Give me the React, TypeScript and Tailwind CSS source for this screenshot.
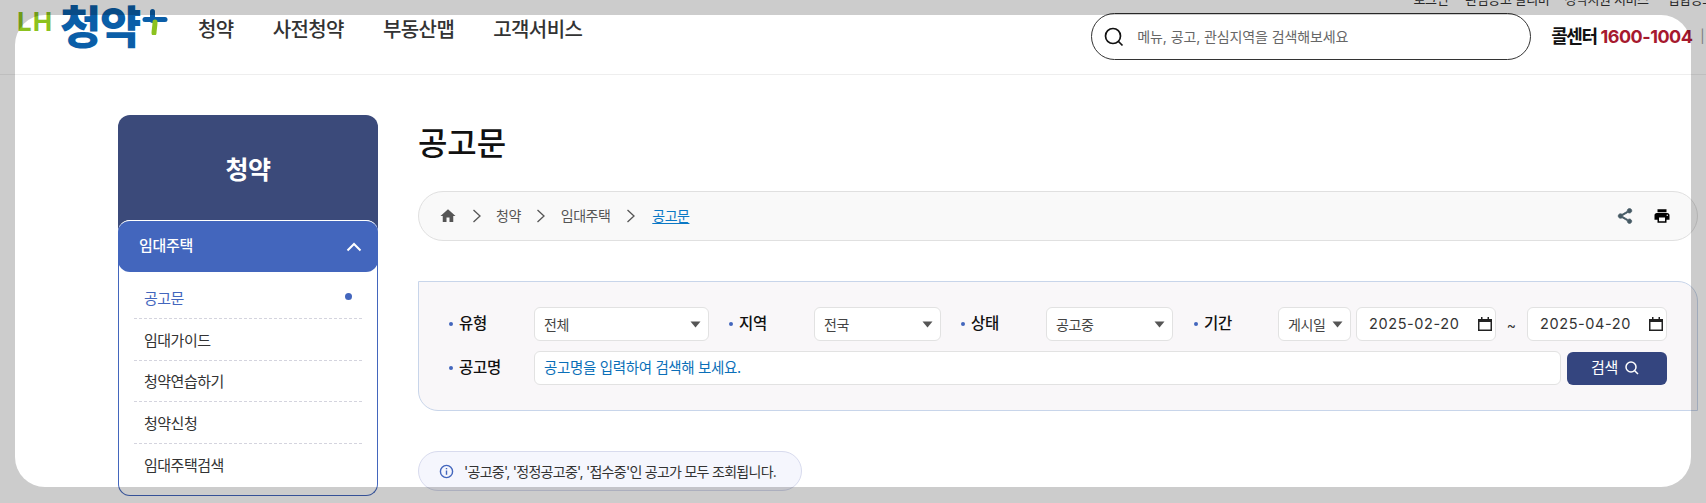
const Tri = ({ className = "" }: { className?: string }) => (
  <svg width="11" height="7" viewBox="0 0 11 7" className={className}>
    <path d="M0.5 0.5h10L5.500 6.500z" fill="#555" />
  </svg>
);

const Chev = () => (
  <svg width="10" height="16" viewBox="0 0 10 16" fill="none" stroke="#555" strokeWidth="1.3">
    <path d="M1.500 2l6.500 6-6.500 6" />
  </svg>
);

const Cal = () => (
  <svg width="14" height="14" viewBox="0 0 14 14" fill="none">
    <path d="M3 0h1.500v2H9.500V0H11v2h3v12H0V2h3z" fill="#222" />
    <rect x="1.500" y="5" width="11" height="7.500" fill="#fff" />
  </svg>
);

const Label = ({ text, className }: { text: string; className: string }) => (
  <div className={`flex items-center shrink-0 text-[15.500px] font-medium text-[#111] tracking-[-0.3px] ${className}`}>
    <span className="w-[4px] h-[4px] rounded-full bg-[#4366bd] mr-[6px]" />
    {text}
  </div>
);

const Select = ({ text, className }: { text: string; className: string }) => (
  <div className={`h-[34px] shrink-0 flex items-center justify-between pl-[9px] pr-[7px] bg-white border border-[#e2e2e2] rounded-[6px] text-[14px] text-[#444] tracking-[-0.4px] ${className}`}>
    <span>{text}</span>
    <Tri />
  </div>
);

const DateBox = ({ text }: { text: string }) => (
  <div className="w-[140px] h-[34px] shrink-0 flex items-center justify-between pl-[12px] pr-[3px] bg-white border border-[#e2e2e2] rounded-[6px] text-[14.500px] text-[#333] tracking-[0.6px]">
    <span>{text}</span>
    <Cal />
  </div>
);

const items = ["임대가이드", "청약연습하기", "청약신청", "임대주택검색"];

export default function App() {
  return (
    <div className="relative w-[1706px] h-[503px] overflow-hidden bg-white [font-family:Inter,'Noto_Sans_CJK_KR',sans-serif]">
      <div className="h-[7px] overflow-hidden flex items-end justify-end text-[13px] leading-[16px] text-[#333] tracking-[-0.4px] whitespace-nowrap">
        <div className="flex translate-x-[1px] -mr-[30px]">
          <span>로그인</span>
          <span className="ml-[17px]">관심공고 알리미</span>
          <span className="ml-[15px]">청약지원 서비스</span>
          <span className="ml-[19px]">입합공고안내</span>
        </div>
      </div>

      <header className="h-[68px] border-b border-[#eeeeee] flex items-center whitespace-nowrap">
        <div className="w-[198px] shrink-0 self-start flex items-start pl-[17px]">
          <span className="text-[26px] leading-[24px] font-bold text-[#8cc21f] mt-[3px] w-[44px] tracking-[1px]">LH</span>
          <span className="text-[45px] leading-[50px] font-black text-[#0a5ea8] -mt-[4px] -ml-[1px] w-[82px] tracking-[-1.500px]">청약</span>
          <svg width="26" height="26" viewBox="0 0 26 26" className="mt-[2px]">
            <path d="M10.500 2.500v9" stroke="#0a5ea8" strokeWidth="5" strokeLinecap="round" />
            <path d="M3 10.500h20" stroke="#0a5ea8" strokeWidth="5" strokeLinecap="round" />
            <path d="M13 13c0 5-1 8-1 11" stroke="#8cc21f" strokeWidth="5" strokeLinecap="round" fill="none" />
          </svg>
        </div>
        <nav className="flex gap-[39px] text-[20px] font-medium text-[#333] tracking-[-0.58px] -mt-[22px]">
          <span>청약</span>
          <span>사전청약</span>
          <span>부동산맵</span>
          <span>고객서비스</span>
        </nav>
        <div className="ml-[509px] w-[440px] h-[47px] shrink-0 -mt-[8px] flex items-center rounded-full border border-[#333] bg-white pl-[11px]">
          <svg width="22" height="22" viewBox="0 0 22 22" fill="none" stroke="#111" strokeWidth="1.700">
            <circle cx="10" cy="10" r="7.500" />
            <path d="M15.500 15.500l4 4" />
          </svg>
          <span className="ml-[12px] text-[14px] text-[#666] tracking-[-0.1px]">메뉴, 공고, 관심지역을 검색해보세요</span>
        </div>
        <div className="ml-[20px] flex items-center text-[18px] font-bold tracking-[-0.5px] -mt-[8px]">
          <span className="text-[#111] tracking-[-1.500px]">콜센터</span>
          <span className="text-[#a6192e] ml-[4px]">1600-1004</span>
          <span className="text-[#999] font-normal text-[13px] ml-[8px]">|</span>
        </div>
      </header>

      <div className="flex pl-[118px] pt-[40px] gap-[40px]">
        <aside className="w-[260px] shrink-0">
          <div className="h-[115px] rounded-t-[12px] bg-[#3b4a7a] flex justify-center pt-[37px] text-[25px] leading-[36px] font-bold text-white tracking-[-0.5px]">
            청약
          </div>
          <div className="-mt-[10px] relative rounded-[12px] border border-[#4366bd] border-t-white bg-white h-[276px]">
            <div className="-mx-px -mt-px h-[52px] rounded-[12px] bg-[#4366bd] border-t border-white flex items-center justify-between pl-[21px] pr-[16px] text-[15px] font-medium text-white tracking-[-0.3px]">
              <span>임대주택</span>
              <svg width="16" height="10" viewBox="0 0 16 10" fill="none" stroke="#fff" strokeWidth="2">
                <path d="M1.500 8.500L8 2l6.500 6.500" />
              </svg>
            </div>
            <ul className="mx-[15px] text-[15px] text-[#333] tracking-[-0.5px]">
              <li className="h-[47px] flex items-center justify-between pl-[10px] pr-[10px] pt-[8px] border-b border-dashed border-[#d4d4de] text-[#4366bd]">
                <span>공고문</span>
                <span className="w-[7px] h-[7px] rounded-full bg-[#4366bd] -mt-[5px]" />
              </li>
              {items.map((t, i) => (
                <li
                  key={t}
                  className={`h-[41.500px] flex items-center pl-[10px] pt-[3px] ${i < 3 ? "border-b border-dashed border-[#d4d4de]" : ""}`}
                >
                  {t}
                </li>
              ))}
            </ul>
          </div>
        </aside>

        <main className="w-[1280px] shrink-0">
          <h1 className="text-[32px] leading-[40px] font-medium text-[#111] tracking-[-0.1px] mt-[9px]">공고문</h1>
          <div className="mt-[27px] h-[50px] rounded-[25px] border border-[#e0e0e0] bg-[#f9f9f9] flex items-center pl-[20px] pr-[26px] text-[14px] text-[#555] tracking-[-0.5px]">
            <svg width="18" height="18" viewBox="0 0 24 24" fill="#555">
              <path d="M10 20v-6h4v6h5v-8h3L12 3 2 12h3v8z" />
            </svg>
            <span className="ml-[15px]"><Chev /></span>
            <span className="ml-[14px] -mt-[1px]">청약</span>
            <span className="ml-[15px]"><Chev /></span>
            <span className="ml-[15px] -mt-[1px]">임대주택</span>
            <span className="ml-[16px]"><Chev /></span>
            <span className="ml-[16px] -mt-[1px] text-[#0b78c5] underline underline-offset-2">공고문</span>
            <div className="ml-auto flex items-center gap-[19px]">
              <svg width="18" height="18" viewBox="0 0 24 24" fill="#455a64" stroke="#455a64" strokeWidth="1">
                <path d="M18 16.080c-.76 0-1.440.3-1.960.77L8.910 12.700c.05-.23.09-.46.09-.7s-.04-.47-.09-.7l7.050-4.110c.54.5 1.250.81 2.040.81 1.660 0 3-1.340 3-3s-1.340-3-3-3-3 1.340-3 3c0 .24.04.47.09.7L8.040 9.810C7.500 9.310 6.790 9 6 9c-1.660 0-3 1.340-3 3s1.340 3 3 3c.79 0 1.500-.31 2.040-.81l7.120 4.160c-.05.21-.08.43-.08.65 0 1.610 1.310 2.920 2.920 2.920 1.610 0 2.920-1.310 2.920-2.920s-1.310-2.920-2.920-2.920z" />
              </svg>
              <svg width="18" height="18" viewBox="0 0 24 24" fill="#000">
                <path d="M19 8H5c-1.660 0-3 1.340-3 3v6h4v4h12v-4h4v-6c0-1.660-1.340-3-3-3zm-3 11H8v-5h8v5zm3-7c-.55 0-1-.45-1-1s.45-1 1-1 1 .45 1 1-.45 1-1 1zm-1-9H6v4h12V3z" />
              </svg>
            </div>
          </div>

          <div className="mt-[40px] h-[130px] rounded-tr-[20px] rounded-bl-[20px] border border-[#c8d5ea] bg-[#f9f7f9] pl-[30px] pt-[25px] flex flex-col gap-[10px] whitespace-nowrap">
            <div className="flex items-center">
              <Label text="유형" className="w-[85px]" />
              <Select text="전체" className="w-[175px]" />
              <Label text="지역" className="w-[85px] ml-[20px]" />
              <Select text="전국" className="w-[127px]" />
              <Label text="상태" className="w-[85px] ml-[20px]" />
              <Select text="공고중" className="w-[127px]" />
              <Label text="기간" className="w-[84px] ml-[21px]" />
              <Select text="게시일" className="w-[73px]" />
              <div className="ml-[5px]"><DateBox text="2025-02-20" /></div>
              <span className="w-[31px] text-center text-[14px] text-[#333]">~</span>
              <DateBox text="2025-04-20" />
            </div>
            <div className="flex items-center">
              <Label text="공고명" className="w-[85px]" />
              <div className="w-[1027px] h-[34px] shrink-0 flex items-center pl-[9px] bg-white border border-[#e2e2e2] rounded-[6px] text-[14.500px] text-[#0b6fb8] tracking-[-0.35px]">
                공고명을 입력하여 검색해 보세요.
              </div>
              <div className="ml-[6px] w-[100px] h-[33px] shrink-0 flex items-center justify-center gap-[6px] pr-[3px] rounded-[6px] bg-[#34457f] text-[15px] text-white tracking-[-0.3px]">
                검색
                <svg width="16" height="16" viewBox="0 0 16 16" fill="none" stroke="#fff" strokeWidth="1.500">
                  <circle cx="7" cy="7" r="5" />
                  <path d="M10.700 10.700l3.300 3.300" />
                </svg>
              </div>
            </div>
          </div>

          <div className="mt-[40px] w-[384px] h-[40px] rounded-[20px] border border-[#d8dbee] bg-[#f5f6fd] flex items-center pl-[20px] text-[14px] text-[#333] tracking-[-0.72px] whitespace-nowrap">
            <svg width="15" height="15" viewBox="0 0 16 16" fill="none" stroke="#4366bd" strokeWidth="1.500">
              <circle cx="8" cy="8" r="6.500" />
              <path d="M8 7v4.500M8 4.300v1.200" />
            </svg>
            <span className="ml-[10px]">'공고중', '정정공고중', '접수중'인 공고가 모두 조회됩니다.</span>
          </div>
        </main>
      </div>

      <div className="absolute left-[15px] top-[15px] w-[1676px] h-[472px] rounded-[30px] shadow-[0_0_0_2000px_rgba(0,0,0,0.2)] pointer-events-none" />
    </div>
  );
}
